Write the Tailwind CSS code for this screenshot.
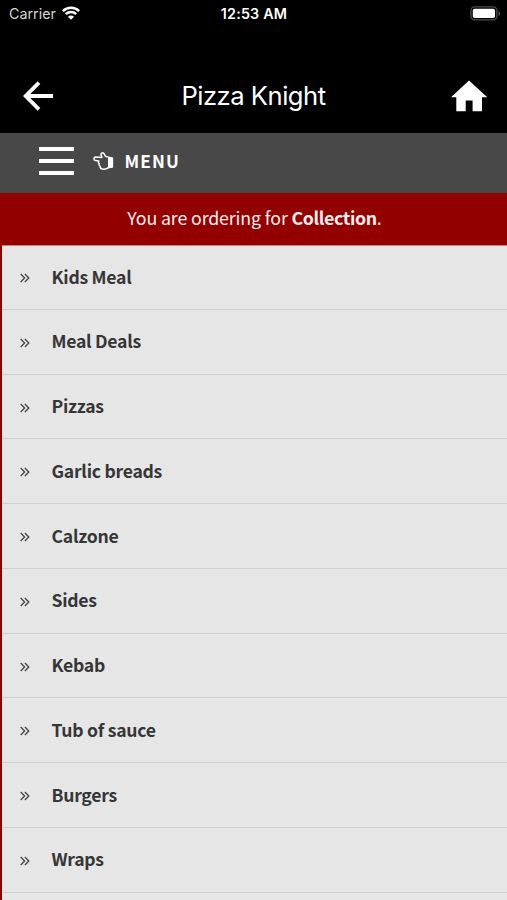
<!DOCTYPE html>
<html lang="en">
<head>
<meta charset="utf-8">
<title>Pizza Knight</title>
<script src="https://cdn.jsdelivr.net/npm/@tailwindcss/browser@4"></script>
</head>
<body class="w-[507px] h-[900px] overflow-hidden bg-black font-['Noto_Sans_CJK_SC',sans-serif]">
<div class="flex flex-col h-[900px]">
  <div class="grid grid-cols-3 items-center h-[27px] shrink-0 pl-[9px] pr-[8px] text-white font-['Inter',sans-serif]">
    <div class="flex items-center gap-[6px] text-[14.3px] leading-[27px] text-[#d4d4d4]">
      <span>Carrier</span>
      <svg class="w-[18px] h-[14px] -mt-[1px]" viewBox="0 0 18 14" fill="none" stroke="#fff" stroke-width="2.5"><path d="M.9 5.1C5.3.6 12.7.6 17.1 5.1M3.8 8.2c2.9-2.8 7.5-2.8 10.4 0"/><path d="M9 13.8 5.9 10.7c1.7-1.6 4.5-1.6 6.2 0z" fill="#fff" stroke="none"/></svg>
    </div>
    <div class="text-center text-[14.3px] leading-[27px] font-semibold whitespace-nowrap tracking-[0.2px]">12:53 AM</div>
    <svg class="justify-self-end w-[31px] h-[15px] -mt-[1px] -mr-[2px]" viewBox="0 0 31 15"><rect x=".9" y=".9" width="26" height="13" rx="3.8" fill="none" stroke="#4d4d4d" stroke-width="1.3"/><rect x="2.8" y="2.7" width="22.2" height="9.4" rx="1.8" fill="#fff"/><path d="M28.5 5.2c2.3.9 2.3 3.7 0 4.6z" fill="#555"/></svg>
  </div>
  <header class="flex items-center h-[106px] shrink-0 pl-[23px] pr-[19px] pt-[32px]">
    <svg class="w-[31px] h-[30px] mr-[3px]" viewBox="0 0 31 30" fill="none" stroke="#fff" stroke-width="3.8"><path d="M16 1.6 2.6 15 16 28.4M2.8 15H30"/></svg>
    <h1 class="flex-1 text-center text-white text-[25.6px] leading-[34px] tracking-[-0.5px] font-['Inter',sans-serif] font-normal">Pizza Knight</h1>
    <svg class="w-[38px] h-[32px]" viewBox="0 0 38 32"><path d="M19 .5 37.3 17.2H32V31.2H22.6V20.5H15.7V31.2H6.3V17.2H1z" fill="#fff"/></svg>
  </header>
  <nav class="flex items-center h-[60px] shrink-0 pl-[39px] bg-[#484848]">
    <div class="flex flex-col gap-[8px] w-[35px] -mt-[4px]"><i class="h-[4px] bg-white"></i><i class="h-[4px] bg-white"></i><i class="h-[4px] bg-white"></i></div>
    <svg class="w-[21px] h-[19px] ml-[19px] -mt-[4px]" viewBox="0 0 21 19" fill="none" stroke="#fff" stroke-width="1.5" stroke-linejoin="round" stroke-linecap="round"><path d="M16 5.4 12.6 4.4 10.6 1.2C9.6.4 7.6 1.4 8 3l.9 2.5L2.4 5C.4 5.3.5 8.2 2.4 8.5l3.4.5c-.6.9-.4 2 .4 2.6-.5 1 0 2.1.8 2.5 0 1.9 1.3 3.1 3 3.1l2.5-.1 3.3-1.6z"/><path d="M16 5.4l3.4.6v8.9l-3.4.6z" fill="#fff"/></svg>
    <span class="ml-[10.5px] -mt-[5px] text-white text-[17.2px] leading-[26px] font-bold tracking-[1.1px]">MENU</span>
  </nav>
  <div class="h-[52px] shrink-0 bg-[#930000] text-[#ffecec] text-[17.8px] leading-[49px] text-center whitespace-nowrap"><span class="tracking-[-0.13px] relative left-[1px]">You are ordering for <b class="font-bold tracking-[-0.36px]">Collection</b>.</span></div>
  <ul class="h-[655px] shrink-0 border-l-2 border-[#930000] bg-[#e6e6e6] text-[#363636] text-[17.6px] tracking-[-0.27px] font-bold" id="menu"></ul>
</div>
<script>
const names = ["Kids Meal","Meal Deals","Pizzas","Garlic breads","Calzone","Sides","Kebab","Tub of sauce","Burgers","Wraps"];
document.getElementById("menu").innerHTML = names.map(n => `<li class="flex items-center h-[64.75px] pl-[18px] border-b border-[#d0d0d0] first:shadow-[inset_0_1px_0_#c98080]"><svg class="w-[10px] h-[10px] mt-[2.5px]" viewBox="0 0 10 10" fill="none" stroke="#444" stroke-width="1.3"><path d="M.7 1 4.6 5 .7 9M4.9 1l3.9 4-3.9 4"/></svg><span class="ml-[21.5px] -mt-[0.5px] leading-[26px]">${n}</span></li>`).join("");
</script>
</body>
</html>
